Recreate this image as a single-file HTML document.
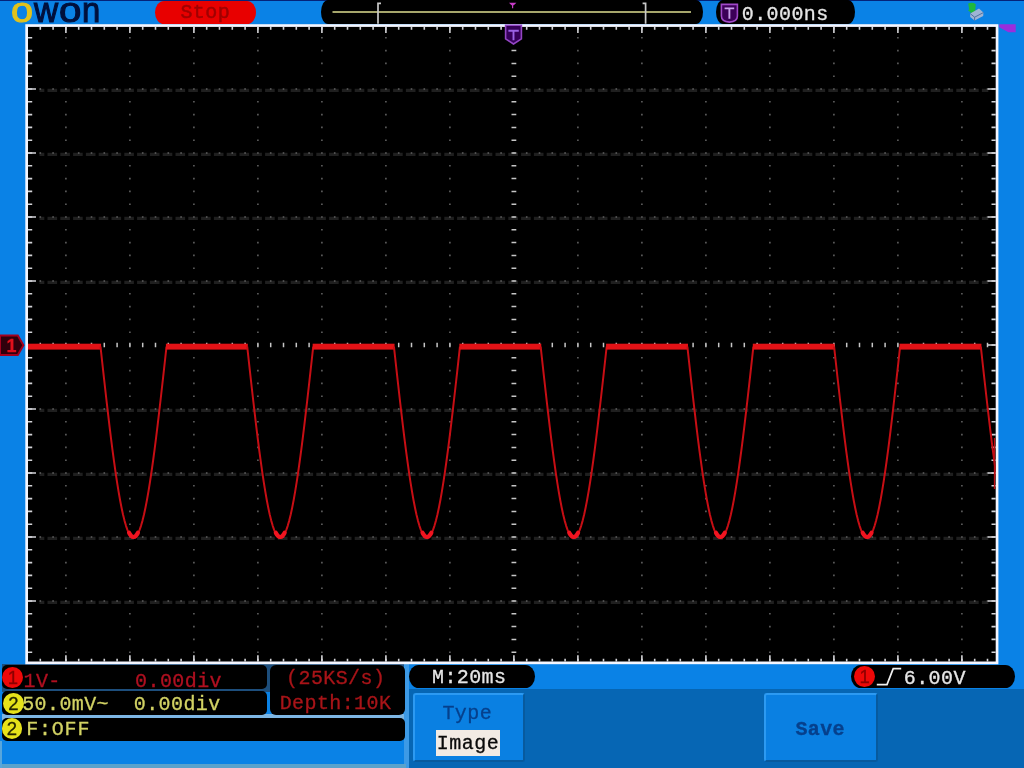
<!DOCTYPE html>
<html lang="en">
<head>
<meta charset="utf-8">
<title>OWON Oscilloscope</title>
<style>
html,body{margin:0;padding:0;}
body{width:1024px;height:768px;position:relative;overflow:hidden;background:#0a82e6;
 font-family:"Liberation Mono","DejaVu Sans Mono",monospace;font-size:20px;letter-spacing:0.4px;line-height:1;}
.abs{position:absolute;}
.blk{position:absolute;background:#000;}
.t{position:absolute;white-space:pre;line-height:20px;height:20px;-webkit-text-stroke:0.3px;}
#topline{left:0;top:0;width:1024px;height:1px;background:#04237a;}
.t,.circ,#logo,svg{filter:blur(0.4px);}
#logo{left:0;top:-7.6px;width:110px;height:35px;font-family:"Liberation Sans","DejaVu Sans",sans-serif;font-size:35px;line-height:35px;letter-spacing:0;color:#00103c;-webkit-text-stroke:1.1px #00103c;}
#logo span{position:absolute;top:0;transform-origin:0 0;}
#logo span:first-child{color:#e2c21c;-webkit-text-stroke:1.1px #e2c21c;}
#stop{left:154.5px;top:1.2px;width:101.5px;height:23px;background:#e80000;border-radius:9px/11.5px;}
#stop .t{left:0;width:100%;text-align:center;top:2.2px;color:#a00000;-webkit-text-stroke:0.5px;}
#mem{left:320.5px;top:0;width:382.5px;height:24.4px;border-radius:7px/12px;}
#tim{left:716px;top:0;width:139px;height:24.4px;border-radius:7px/12px;}
#menu{left:408.5px;top:688.6px;width:616px;height:80px;background:#0666b4;}
.btn{position:absolute;top:692.5px;height:69.5px;background:#0a80e2;border-radius:3px;box-sizing:border-box;
 border-top:2px solid #2c9af2;border-left:2px solid #2c9af2;border-right:2px solid #075a9e;border-bottom:2px solid #075a9e;}
.circ{position:absolute;width:20.8px;height:20.8px;border-radius:50%;text-align:center;font-family:"Liberation Sans",sans-serif;font-size:18.5px;line-height:21.4px;letter-spacing:0;-webkit-text-stroke:0.3px;}
</style>
</head>
<body>
<div id="topline" class="abs"></div>
<div id="logo" class="abs"><span style="left:10.6px;transform:scaleX(1.13)">o</span><span style="left:34px;transform:scaleX(.954)">w</span><span style="left:59.3px;transform:scaleX(1.147)">o</span><span style="left:81.8px;transform:scaleX(.937)">n</span></div>
<div id="stop" class="abs"><div class="t">Stop</div></div>

<div id="mem" class="blk"></div>
<div id="tim" class="blk"></div>
<div class="t" style="left:741.8px;top:4.8px;color:#e6e6e6;">0.000ns</div>


<!-- bottom-left panel -->
<div class="abs" style="left:1.5px;top:664.2px;width:407px;height:27.5px;background:#1d4e7c;"></div><div class="abs" style="left:1.5px;top:714px;width:407px;height:6px;background:#7db6e4;"></div><div class="abs" style="left:404px;top:664.2px;width:4.5px;height:104px;background:#3d9ae6;"></div>
<div class="blk" style="left:2px;top:665.4px;width:264.6px;height:23.6px;border-radius:5px;"></div>
<div class="blk" style="left:2px;top:691.4px;width:264.6px;height:23.4px;border-radius:5px;"></div>
<div class="blk" style="left:270.2px;top:664.8px;width:135px;height:50.2px;border-radius:6px;"></div>
<div class="blk" style="left:2px;top:718.2px;width:403.2px;height:22.4px;border-radius:5px;"></div>
<div class="abs" style="left:0;top:764px;width:406px;height:4px;background:#5aa2cc;"></div><div class="abs" style="left:0;top:741px;width:2.2px;height:27px;background:#58a6dc;"></div>

<div class="circ" style="left:2.4px;top:667.4px;background:#ee0808;color:#8c0000;">1</div>
<div class="circ" style="left:3px;top:693.4px;background:#e6e21a;color:#262600;">2</div>
<div class="circ" style="left:1.6px;top:718.2px;background:#e6e21a;color:#262600;">2</div>
<div class="t" style="left:23.5px;top:671.5px;color:#b01020;">1V-      0.00div</div>
<div class="t" style="left:22.2px;top:695.2px;color:#d2d264;">50.0mV~  0.00div</div>
<div class="t" style="left:26.2px;top:720.4px;letter-spacing:0.8px;color:#d2d264;">F:OFF</div>
<div class="t" style="left:268.2px;width:135px;text-align:center;top:668.8px;color:#a81418;">(25KS/s)</div>
<div class="t" style="left:268px;width:135px;text-align:center;top:694.3px;color:#a81418;">Depth:10K</div>

<!-- menu -->
<div id="menu" class="abs"></div>
<div class="blk" style="left:409px;top:664.6px;width:126px;height:23.6px;border-radius:10px/11.8px;"></div>
<div class="t" style="left:432px;top:668.2px;color:#e6e6e6;">M:20ms</div>
<div class="blk" style="left:850.8px;top:664.6px;width:164.4px;height:23.6px;border-radius:10px/11.8px;"></div>
<div class="circ" style="left:854.2px;top:665.8px;background:#ee0808;color:#8c0000;">1</div>
<div class="t" style="left:903.8px;top:669.3px;color:#e6e6e6;">6.00V</div>

<div class="btn" style="left:412.5px;width:112.5px;"></div>
<div class="t" style="left:411px;width:112.5px;text-align:center;top:703.6px;color:#06408c;">Type</div>
<div class="abs" style="left:436px;top:730.4px;width:64.2px;height:25.8px;background:#f2ebe4;"></div>
<div class="t" style="left:436px;width:64.2px;text-align:center;top:734.2px;color:#0a0a0a;letter-spacing:0.5px;">Image</div>
<div class="btn" style="left:764.4px;width:113.6px;"></div>
<div class="t" style="left:763.4px;width:113.6px;text-align:center;top:719.8px;color:#06408c;font-weight:bold;">Save</div>
<svg class="abs" style="left:0;top:0" width="1024" height="768" viewBox="0 0 1024 768">
<rect x="26.65" y="25.55" width="970.4" height="637.3" fill="#000" stroke="#f4f6ff" stroke-width="2.7"/>
<clipPath id="pc"><rect x="28" y="26.9" width="967.7" height="634.6"/></clipPath>
<path d="M39.5 90.4H988.3M39.5 154.4H988.3M39.5 218.4H988.3M39.5 282.4H988.3M39.5 410.4H988.3M39.5 474.4H988.3M39.5 538.4H988.3M39.5 602.4H988.3" stroke="#1f1f1f" stroke-width="3.4" stroke-dasharray="9.6 3.2" stroke-dashoffset="4.8" fill="none"/>
<path d="M39.5 89H988.3M39.5 153H988.3M39.5 217H988.3M39.5 281H988.3M39.5 409H988.3M39.5 473H988.3M39.5 537H988.3M39.5 601H988.3M65.9 37V653M129.9 37V653M193.9 37V653M257.9 37V653M321.9 37V653M385.9 37V653M449.9 37V653M577.9 37V653M641.9 37V653M705.9 37V653M769.9 37V653M833.9 37V653M897.9 37V653M961.9 37V653" stroke="#606060" stroke-width="1.6" stroke-dasharray="1.6 11.2" fill="none"/>
<path d="M39.55 345H988.3" stroke="#c6c6c6" stroke-width="4.6" stroke-dasharray="1.5 11.3" fill="none"/>
<path d="M513.9 37.05V653" stroke="#c6c6c6" stroke-width="4.8" stroke-dasharray="1.5 11.3" fill="none"/>
<path d="M39.5 28.3H988.3M39.5 660.1H988.3" stroke="#d4d4d8" stroke-width="2.8" stroke-dasharray="1.6 11.2" fill="none"/>
<path d="M65.1 30H962.7M65.1 658.4H962.7" stroke="#d4d4d8" stroke-width="6.2" stroke-dasharray="1.6 62.4" fill="none"/>
<path d="M30.1 37V653M993.6 37V653" stroke="#d4d4d8" stroke-width="4.2" stroke-dasharray="1.6 11.2" fill="none"/>
<path d="M32 88.2V601.8M991.7 88.2V601.8" stroke="#d4d4d8" stroke-width="8" stroke-dasharray="1.6 62.4" fill="none"/>
<defs><g id="tr"><path d="M-33 0L-31.5 13.65L-30 27.22L-28.5 40.66L-27 53.9L-25.5 66.85L-24 79.47L-22.5 91.68L-21 103.42L-19.5 114.64L-18 125.27L-16.5 135.27L-15 144.57L-13.5 153.14L-12 160.93L-10.5 167.9L-9 174.01L-7.5 179.24L-6 183.55L-4.5 186.93L-3 189.35L-1.5 190.81L0 191.3L1.5 190.81L3 189.35L4.5 186.93L6 183.55L7.5 179.24L9 174.01L10.5 167.9L12 160.93L13.5 153.14L15 144.57L16.5 135.27L18 125.27L19.5 114.64L21 103.42L22.5 91.68L24 79.47L25.5 66.85L27 53.9L28.5 40.66L30 27.22L31.5 13.65L33 0" fill="none" stroke="#c60e14" stroke-width="2" stroke-linejoin="round"/><path d="M-4.4 186.22L-3.3 188.04L-2.2 189.35L-1.1 190.14L0 190.4L1.1 190.14L2.2 189.35L3.3 188.04L4.4 186.22" fill="none" stroke="#f01420" stroke-width="4.2" stroke-linecap="round" stroke-linejoin="round"/><rect x="32.4" y="-2.9" width="81.92" height="5.9" fill="#e31216"/></g></defs>
<g clip-path="url(#pc)">
<use href="#tr" x="-13.22" y="346.6"/>
<use href="#tr" x="133.5" y="346.6"/>
<use href="#tr" x="280.22" y="346.6"/>
<use href="#tr" x="426.94" y="346.6"/>
<use href="#tr" x="573.66" y="346.6"/>
<use href="#tr" x="720.38" y="346.6"/>
<use href="#tr" x="867.1" y="346.6"/>
<use href="#tr" x="1013.82" y="346.6"/>
<path d="M994.6 438V489" stroke="#b80e14" stroke-width="1.5"/>
</g>
<!-- memory bar -->
<rect x="332.5" y="11" width="358.5" height="2" fill="#a6a66c"/>
<path d="M378 23.8V3.4h3M645.6 23.8V3.4h-3" fill="none" stroke="#c8c8c8" stroke-width="1.7"/>
<path d="M509 2.8h7.4l-2.6 2.4h-0.6v3h-1.2v-3h-0.6z" fill="#c63cc6"/>
<!-- T shield in time pill -->
<path d="M721.4 4.4h16v11.5q0 5.6-8 6.2q-8-0.6-8-6.2z" fill="#3c0058" stroke="#a048c8" stroke-width="1.6"/>
<path d="M724.6 8.4h9.6M729.4 8.4v10.4" stroke="#c9a0ea" stroke-width="1.9" fill="none"/>
<!-- trigger T marker -->
<path d="M505.6 25.2h15.8v13.6l-7.9 5.2l-7.9-5.2z" fill="#36005a" stroke="#9446c4" stroke-width="1.6"/>
<path d="M508.4 30.8h10.4M513.5 30.8v9.4" stroke="#9a62e4" stroke-width="1.9" fill="none"/>
<!-- channel 1 marker -->
<path d="M0 335.4h17.8l5.6 9.8l-5.6 9.8h-17.8z" fill="#30000c" stroke="#a4001e" stroke-width="2"/>
<!-- trigger level marker (right) -->
<path d="M999.2 24.2h16.5v8h-7.2l-9.3-5z" fill="#9a2edc"/>
<!-- usb icon -->
<path d="M968.2 3.6q4.2-1.8 7.6 0.6l-0.6 6.4l1.6 0.4l-4 3.6l-5-4.6l1.4-0.2z" fill="#1fb83c"/>
<path d="M970.2 13.6l8.8-5l4.4 4l-0.2 3.4l-8.6 4.6l-4.4-3.6z" fill="#9fb4d4"/>
<path d="M970.2 13.6l4.4 3.6l8.8-4.6M974.6 17.2v3.4" stroke="#4a6a9a" stroke-width="0.9" fill="none"/>
<!-- trigger edge symbol -->
<path d="M876.8 684.6h10.2l6.2-16h8" fill="none" stroke="#f0f0f0" stroke-width="1.7"/>
</svg>
<div class="t" style="left:5px;top:335.6px;width:13px;text-align:center;color:#e0101c;font-family:'Liberation Sans',sans-serif;font-weight:bold;font-size:18px;letter-spacing:0;">1</div>
</body>
</html>
